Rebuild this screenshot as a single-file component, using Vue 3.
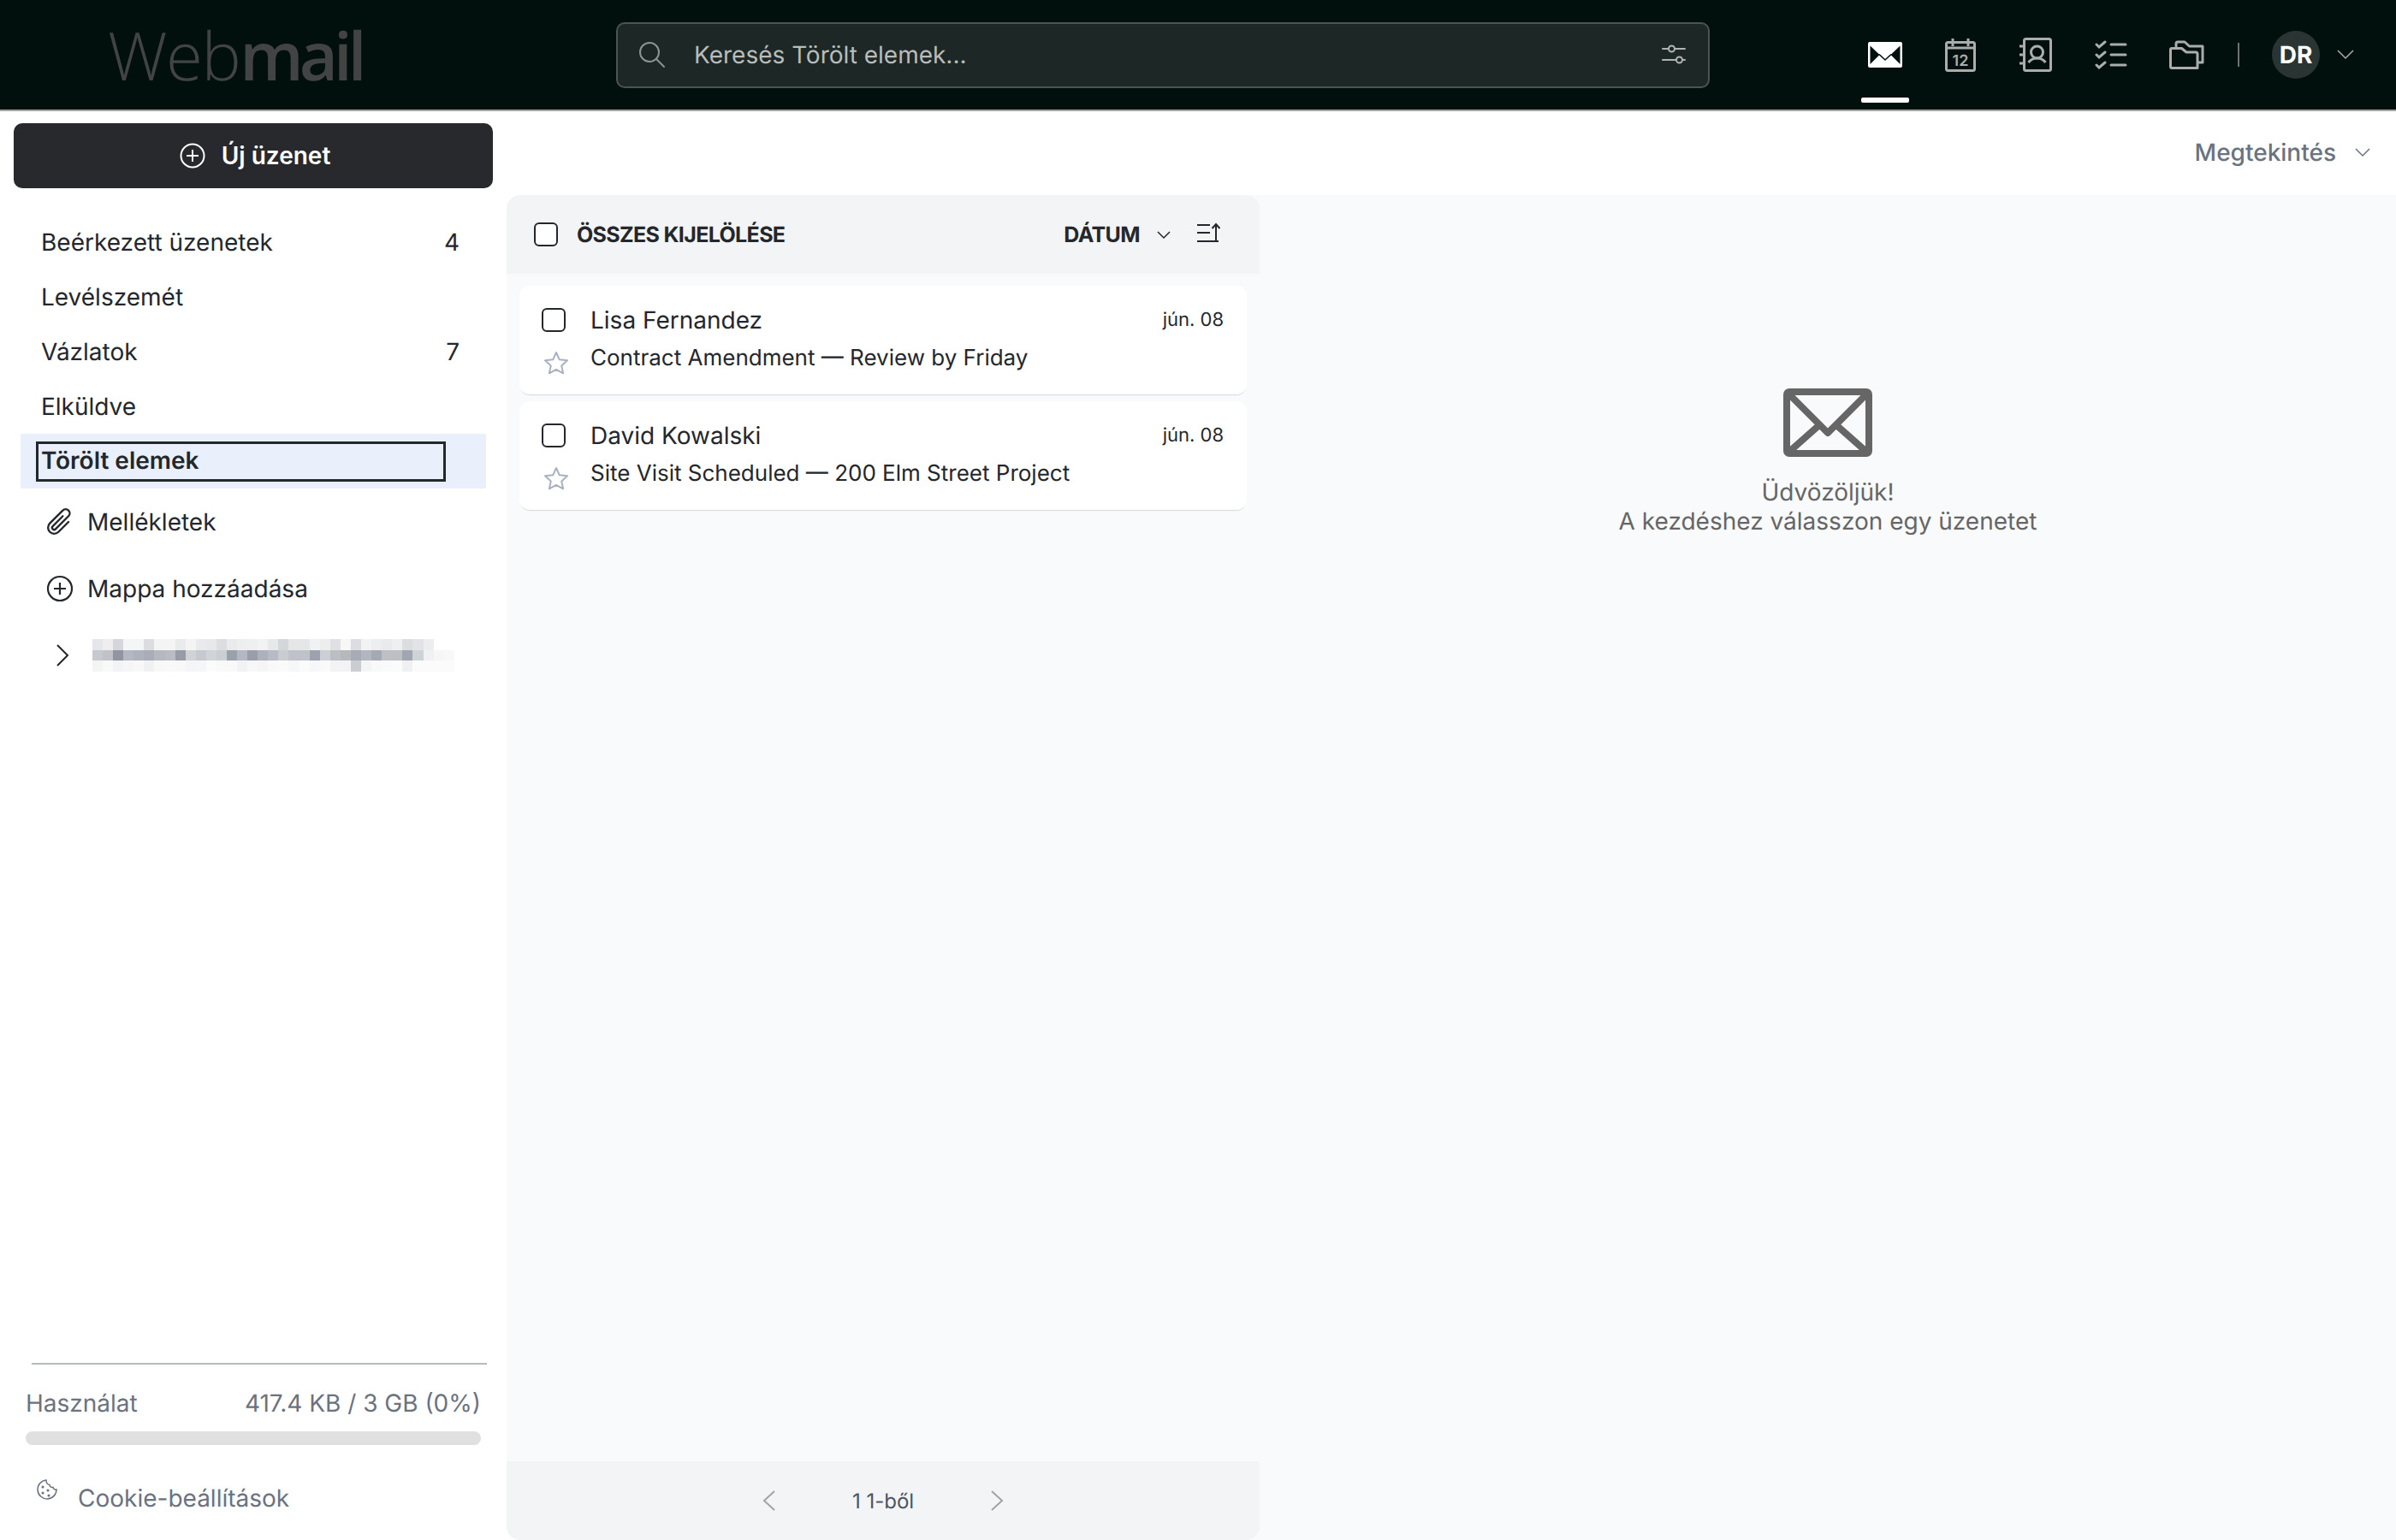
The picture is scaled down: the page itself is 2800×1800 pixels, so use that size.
<script setup>
import { computed } from 'vue'

const folders = [
  { name: 'Beérkezett üzenetek', count: 4 },
  { name: 'Levélszemét' },
  { name: 'Vázlatok', count: 7 },
  { name: 'Elküldve' },
  { name: 'Törölt elemek', active: true },
]

const messages = [
  { from: 'Lisa Fernandez', subject: 'Contract Amendment — Review by Friday', date: 'jún. 08' },
  { from: 'David Kowalski', subject: 'Site Visit Scheduled — 200 Elm Street Project', date: 'jún. 08' },
]

// the account name is pixelated in the screenshot, so keep it as colour cells
const mosaicRows = [
  'e5e6ea eeeef0 d5d6db f4f5f7 f4f5f7 dcdde1 f4f4f4 f4f4f4 e9eaec f4f4f4 e9eaec e7e8ea dcdde1 e9eaec eeeef0 eeeff1 f2f2f4 e7e8ea d3d7da e5e6e8 e5e6e8 f1f2f4 eceded dfe0e4 f7f7f7 dcdde3 f2f2f3 eeeef0 e9eaec eeeff1 dcdde1 e2e3e6 ecedef',
  'c6cad0 c0c2c8 9095a0 b3b8c2 aeb2bc a8adb7 b3b8c1 bbbcc1 979ca7 d0d2d6 c6cad0 d0d3d8 cbced3 99a1ab b3b8c2 999ea8 adb1bc b7bbc5 c9cdd2 bfc3c9 bfc3c9 9da2ae ccd0d4 bbbfc4 b5b9be a6abb4 b2b6bf a5a9b3 bfc0c5 bcc0c4 a1a6b1 ced3d6 f0f1f3 f6f6f7 f8f8f8',
  'f4f4f4 f8f9f9 f2f3f5 f6f6f6 f8f8f8 f0f1f3 f8f8f8 f9f9f9 f8f8f8 f4f5f6 f5f6f7 fafbfb f9f9f9 f9f9f9 f1f2f4 f7f7f7 f5f5f5 f9f9f9 fafafa f6f7f8 fafbfb f6f7f9 fafafa f3f3f5 f3f3f5 cacdd2 f5f5f5 f8f9f9 f9fafb fafbfb f0f0f3 fbfbfb fbfbfb fbfbfb fbfbfb',
]
const mosaic = computed(() => mosaicRows.map(r => r.split(' ').map(c => '#' + c)))
</script>

<template>
  <div class="app">
    <header class="topbar">
      <div class="logo"><span class="logo-thin">Web</span><span class="logo-bold">mail</span></div>

      <div class="search">
        <svg class="search-icon" width="32" height="32" viewBox="0 0 32 32" fill="none" stroke="#8b9592" stroke-width="2">
          <circle cx="13" cy="13" r="11" />
          <path d="M21 21l9 9" stroke-linecap="round" />
        </svg>
        <span class="search-text">Keresés Törölt elemek...</span>
        <svg class="filter-icon" width="30" height="26" viewBox="0 0 30 26" fill="none" stroke="#b0b5b3" stroke-width="2" stroke-linecap="round">
          <path d="M2 6h7M16 6h12M2 19h16M25 19h3" />
          <circle cx="12.5" cy="6" r="3.5" />
          <circle cx="21.5" cy="19" r="3.5" />
        </svg>
      </div>

      <nav class="nav">
        <a class="nav-item active">
          <svg width="40" height="30" viewBox="0 0 40 30">
            <rect width="40" height="30" rx="2" fill="#fff" />
            <path d="M2.5 4.5L13.5 15L2.5 26zM37.5 4.5L26.5 15L37.5 26z" fill="#010f0d" />
            <path d="M13 14.5L20 21L27 14.5" fill="none" stroke="#010f0d" stroke-width="1.6" />
          </svg>
        </a>
        <a class="nav-item">
          <svg width="38" height="40" viewBox="0 0 38 40" fill="none" stroke="#a9adab" stroke-width="3">
            <rect x="2.5" y="5.5" width="33" height="33" rx="2" />
            <path d="M2.5 12h33M10 1v9M28 1v9" />
            <text x="19" y="32.5" class="cal-num">12</text>
          </svg>
        </a>
        <a class="nav-item">
          <svg width="38" height="40" viewBox="0 0 38 40" fill="none" stroke="#a9adab" stroke-width="3">
            <rect x="5.5" y="1.5" width="31" height="37" rx="2" />
            <path d="M0 10h5M0 20h5M0 30h5" />
            <circle cx="20.5" cy="17" r="7" />
            <path d="M10.5 29c3-4 6-5 10-5s7 1 10 5" />
          </svg>
        </a>
        <a class="nav-item">
          <svg width="38" height="34" viewBox="0 0 38 34" fill="none" stroke="#a9adab" stroke-width="3" stroke-linecap="round">
            <path d="M2 5l3 3 7-6M2 17l3 3 7-6M2 29l3 3 7-6" />
            <path d="M19 5h17M19 17h17M19 29h17" />
          </svg>
        </a>
        <a class="nav-item">
          <svg class="folder-icon" width="42" height="36" viewBox="0 0 42 36" fill="none" stroke="#a9adab" stroke-width="3" stroke-linejoin="round">
            <path d="M1.5 12Q1.5 10.500 3 10.500H14.500L20 15H31Q33 15 33 17V33.500H3Q1.500 33.500 1.500 32Z" />
            <path d="M8 10.500V5Q8 3 10 3H18L23.500 8H39V27H33" />
          </svg>
        </a>
      </nav>

      <span class="nav-divider"></span>
      <div class="avatar">DR</div>
      <svg class="user-chevron" width="20" height="12" viewBox="0 0 20 12" fill="none" stroke="#a9adab" stroke-width="1.500">
        <path d="M1 1l9 9 9-9" />
      </svg>
    </header>

    <div class="body">
      <aside class="sidebar">
        <button class="compose">
          <svg width="30" height="30" viewBox="0 0 30 30" fill="none" stroke="#fff" stroke-width="2">
            <circle cx="15" cy="15" r="13.500" />
            <path d="M15 8v14M8 15h14" />
          </svg>
          <span>Új üzenet</span>
        </button>

        <ul class="folders">
          <li v-for="f in folders" :key="f.name" class="folder" :class="{ active: f.active }">
            <span class="folder-name">{{ f.name }}</span>
            <span v-if="f.count" class="folder-count">{{ f.count }}</span>
          </li>
        </ul>

        <div class="extra first">
          <svg class="clip" width="38" height="38" viewBox="0 0 16 16" fill="#24272b">
            <path transform="rotate(45 8 8)" d="M4.500 3a2.500 2.500 0 0 1 5 0v9a1.500 1.500 0 0 1-3 0V5a.5.5 0 0 1 1 0v7a.5.5 0 0 0 1 0V3a1.500 1.500 0 1 0-3 0v9a2.500 2.500 0 0 0 5 0V5a.5.5 0 0 1 1 0v7a3.500 3.500 0 1 1-7 0V3z" />
          </svg>
          <span>Mellékletek</span>
        </div>
        <div class="extra">
          <svg width="32" height="32" viewBox="0 0 32 32" fill="none" stroke="#24272b" stroke-width="2.200">
            <circle cx="16" cy="16" r="14" />
            <path d="M16 9v14M9 16h14" />
          </svg>
          <span>Mappa hozzáadása</span>
        </div>
        <div class="extra account">
          <svg width="28" height="28" viewBox="0 0 28 28" fill="none" stroke="#24272b" stroke-width="2">
            <path d="M8 2l12 12L8 26" />
          </svg>
          <div class="mosaic">
            <div v-for="(row, i) in mosaic" :key="i" class="mosaic-row">
              <i v-for="(c, j) in row" :key="j" :style="{ background: c }"></i>
            </div>
          </div>
        </div>

        <footer class="side-foot">
          <div class="side-line"></div>
          <div class="usage">
            <span>Használat</span>
            <span>417.4 KB / 3 GB (0%)</span>
          </div>
          <div class="usage-bar"></div>
          <div class="cookie">
            <svg width="26" height="26" viewBox="0 0 26 26" fill="none" stroke="#6b7280" stroke-width="1.500">
              <path d="M12 2a11 11 0 1 0 12 11c-2 .5-3.500-.5-4-2.500-2 .5-4-1-4-3-2 0-4-2-4-5.500z" />
              <circle cx="8" cy="10" r=".8" fill="#6b7280" />
              <circle cx="14" cy="14" r=".8" fill="#6b7280" />
              <circle cx="8" cy="17" r=".8" fill="#6b7280" />
              <circle cx="15" cy="20" r=".8" fill="#6b7280" />
            </svg>
            <span>Cookie-beállítások</span>
          </div>
        </footer>
      </aside>

      <main class="main">
        <div class="toolbar">
          <span>Megtekintés</span>
          <svg width="18" height="11" viewBox="0 0 18 11" fill="none" stroke="#6b7280" stroke-width="1.500">
            <path d="M1 1l8 8 8-8" />
          </svg>
        </div>

        <div class="content">
          <section class="list">
            <div class="list-head">
              <input type="checkbox" class="check" />
              <span class="select-all">ÖSSZES KIJELÖLÉSE</span>
              <span class="sort">DÁTUM</span>
              <svg class="sort-chevron" width="16" height="10" viewBox="0 0 16 10" fill="none" stroke="#24272b" stroke-width="1.500">
                <path d="M1 1l7 7 7-7" />
              </svg>
              <svg class="sort-icon" width="28" height="24" viewBox="0 0 28 24" fill="none" stroke="#24272b" stroke-width="2">
                <path d="M1 3h15M1 12h15M1 22h25M23 22V2M18.500 7L23 2l4.500 5" />
              </svg>
            </div>

            <div class="cards">
              <article v-for="m in messages" :key="m.from" class="card">
                <input type="checkbox" class="check" />
                <span class="from">{{ m.from }}</span>
                <span class="date">{{ m.date }}</span>
                <svg class="star" width="30" height="28" viewBox="0 0 30 28" fill="none" stroke="#a9b1c0" stroke-width="2" stroke-linejoin="round">
                  <path d="M15 2l3.800 8.300 9.200 1-6.800 6.100 1.900 8.900L15 21.800l-8.100 4.500 1.900-8.900L2 11.300l9.200-1z" />
                </svg>
                <span class="subject">{{ m.subject }}</span>
              </article>
            </div>

            <div class="pager">
              <svg width="15" height="24" viewBox="0 0 15 24" fill="none" stroke="#a0a3a8" stroke-width="2">
                <path d="M14 1L2 12l12 11" />
              </svg>
              <span>1 1-ből</span>
              <svg width="15" height="24" viewBox="0 0 15 24" fill="none" stroke="#a0a3a8" stroke-width="2">
                <path d="M1 1l12 11L1 23" />
              </svg>
            </div>
          </section>

          <section class="preview">
            <svg width="104" height="80" viewBox="0 0 104 80" fill="none" stroke="#666" stroke-width="8" stroke-linejoin="round">
              <rect x="4" y="4" width="96" height="72" rx="3" />
              <path d="M6 6l46 46L98 6M8 73l35-31M96 73L61 42" />
            </svg>
            <p>Üdvözöljük!<br />A kezdéshez válasszon egy üzenetet</p>
          </section>
        </div>
      </main>
    </div>
  </div>
</template>

<style>
body {
  margin: 0;
  background: #fff;
}
</style>

<style scoped>
* {
  box-sizing: border-box;
}

.app {
  height: 100vh;
  display: flex;
  flex-direction: column;
  font-family: Inter, "Liberation Sans", sans-serif;
  font-size: 28px;
  color: #24272b;
  overflow: hidden;
  text-rendering: geometricPrecision;
}

.topbar {
  flex: 0 0 130px;
  display: flex;
  align-items: center;
  background: #010f0d;
  border-bottom: 2px solid #a0a3a0;
}

.logo {
  flex: 0 0 720px;
  padding-left: 126px;
  font-family: "Open Sans", sans-serif;
  font-size: 78px;
  line-height: 1;
  color: #424444;
}

.logo-thin {
  font-weight: 300;
  letter-spacing: -1.5px;
}

.logo-bold {
  font-weight: 600;
  letter-spacing: -5px;
}

.search {
  flex: 0 0 1278px;
  height: 77px;
  display: flex;
  align-items: center;
  background: #1d2826;
  border: 2px solid #4a5553;
  border-radius: 10px;
  padding: 0 25px 0 24px;
}

.search-text {
  margin-left: 33px;
  color: #b8bcba;
}

.filter-icon {
  margin-left: auto;
}

.nav {
  display: flex;
  gap: 32px;
  margin-left: 177px;
}

.nav-item {
  position: relative;
  width: 56px;
  height: 128px;
  display: flex;
  align-items: center;
  justify-content: center;
}

.nav-item.active::after {
  content: "";
  position: absolute;
  left: 0;
  right: 0;
  bottom: 8px;
  height: 6px;
  border-radius: 2px;
  background: #fff;
}

.folder-icon {
  margin-left: 2px;
}

.cal-num {
  font-family: Inter, sans-serif;
  font-size: 18px;
  font-weight: 600;
  fill: #a9adab;
  stroke: none;
  text-anchor: middle;
}

.nav-divider {
  width: 2px;
  height: 28px;
  margin-left: 32px;
  background: #6d7371;
}

.avatar {
  width: 56px;
  height: 56px;
  margin-left: 38px;
  border-radius: 50%;
  background: #2a3533;
  color: #fff;
  font-weight: 700;
  display: flex;
  align-items: center;
  justify-content: center;
}

.user-chevron {
  margin-left: 20px;
}

.body {
  flex: 1;
  display: flex;
  min-height: 0;
}

.sidebar {
  flex: 0 0 592px;
  display: flex;
  flex-direction: column;
}

.compose {
  height: 76px;
  margin: 14px 16px 31px;
  border: 0;
  border-radius: 10px;
  background: #28292c;
  color: #fff;
  font: 600 28px Inter, sans-serif;
  display: flex;
  align-items: center;
  justify-content: center;
  gap: 19px;
  padding-left: 10px;
}

.folders {
  list-style: none;
  margin: 0;
  padding: 0;
}

.folder {
  height: 64px;
  margin: 0 24px;
  padding: 0 31px 0 24px;
  display: flex;
  align-items: center;
  justify-content: space-between;
}

.folder.active {
  background: #e9f0fb;
  padding-left: 18px;
  font-weight: 600;
}

.folder.active .folder-name {
  width: 479px;
  height: 47px;
  margin-top: 1px;
  padding-left: 3px;
  line-height: 39px;
  border: 3px solid #23272e;
}

.extra {
  height: 64px;
  margin-top: 14px;
  padding-left: 54px;
  display: flex;
  align-items: center;
  gap: 16px;
}

.extra.first {
  margin-top: 7px;
}

.clip {
  margin: 0 -3px;
}

.account {
  padding-left: 59px;
  gap: 21px;
}

.mosaic-row {
  display: flex;
  height: 12.500px;
}

.mosaic-row i {
  width: 12.080px;
}

.side-foot {
  margin-top: auto;
  padding-bottom: 32px;
}

.side-line {
  height: 2px;
  margin: 0 23px 28px 37px;
  background: #b5bbb9;
}

.usage {
  display: flex;
  justify-content: space-between;
  padding: 0 30px 0 30px;
  line-height: 34px;
  color: #6b7280;
}

.usage-bar {
  height: 16px;
  margin: 16px 30px 0;
  border-radius: 8px;
  background: #e0e0e0;
}

.cookie {
  display: flex;
  align-items: center;
  gap: 23px;
  margin-top: 45px;
  padding-left: 42px;
  line-height: 34px;
  color: #6b7280;
}

.cookie svg {
  margin-top: -20px;
}

.main {
  flex: 1;
  display: flex;
  flex-direction: column;
  min-width: 0;
}

.toolbar {
  flex: 0 0 98px;
  display: flex;
  align-items: center;
  justify-content: flex-end;
  gap: 22px;
  padding: 0 30px 2px 0;
  color: #6b7280;
  font-weight: 500;
}

.content {
  flex: 1;
  display: flex;
  min-height: 0;
  background: #f9fafb;
  border-radius: 16px 0 0 16px;
}

.list {
  flex: 0 0 880px;
  display: flex;
  flex-direction: column;
}

.list-head {
  flex: 0 0 92px;
  display: flex;
  align-items: center;
  padding: 1px 46px 0 32px;
  background: #f3f4f6;
  border-radius: 16px 16px 0 0;
  font-size: 25px;
  font-weight: 700;
}

.check {
  appearance: none;
  width: 28px;
  height: 28px;
  margin: 0;
  border: 2px solid #24272b;
  border-radius: 6px;
  background: #fff;
}

.list-head .check {
  margin-top: -1px;
}

.select-all {
  margin-left: 22px;
  letter-spacing: -0.65px;
}

.sort {
  margin-left: auto;
  letter-spacing: -0.6px;
}

.sort-chevron {
  margin-left: 20px;
}

.sort-icon {
  margin-left: 30px;
  margin-top: -5px;
}

.cards {
  flex: 1;
  padding: 14px 15px;
  display: flex;
  flex-direction: column;
  gap: 8px;
}

.card {
  height: 127px;
  padding: 24px 27px 0 26px;
  display: grid;
  grid-template-columns: 57px 1fr auto;
  grid-template-rows: 32px 32px;
  row-gap: 12px;
  background: #fff;
  border-radius: 12px;
  box-shadow: 0 2px 1px -1px #d5d8de;
}

.card .check {
  align-self: center;
}

.from {
  line-height: 32px;
}

.subject {
  grid-column: 2 / 4;
  font-size: 26px;
  line-height: 33px;
}

.date {
  font-size: 22px;
  line-height: 33px;
}

.star {
  margin: 8px 0 0 2px;
}

.pager {
  flex: 0 0 92px;
  display: flex;
  align-items: center;
  justify-content: center;
  gap: 90px;
  background: #f3f4f6;
  border-radius: 0 0 16px 16px;
  font-size: 24px;
  color: #4b5563;
}

.preview {
  flex: 1;
  display: flex;
  flex-direction: column;
  align-items: center;
  padding-top: 226px;
}

.preview p {
  margin: 24px 0 0;
  text-align: center;
  line-height: 34px;
  color: #666;
}
</style>
